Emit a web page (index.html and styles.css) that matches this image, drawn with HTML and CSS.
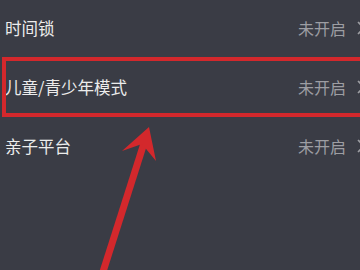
FILE: index.html
```html
<!DOCTYPE html>
<html lang="zh">
<head>
<meta charset="utf-8">
<link rel="stylesheet" href="styles.css">
</head>
<body>
<div class="screen">
  <ul class="list">
    <li class="row"><span class="label">时间锁</span><span class="value">未开启<svg class="chev" width="8" height="14" viewBox="0 0 8 14"><polyline points="1,1 7,7 1,13" fill="none" stroke="#9d9ea3" stroke-width="1.6"/></svg></span></li>
    <li class="row"><span class="label">儿童/青少年模式</span><span class="value">未开启<svg class="chev" width="8" height="14" viewBox="0 0 8 14"><polyline points="1,1 7,7 1,13" fill="none" stroke="#9d9ea3" stroke-width="1.6"/></svg></span></li>
    <li class="row"><span class="label">亲子平台</span><span class="value">未开启<svg class="chev" width="8" height="14" viewBox="0 0 8 14"><polyline points="1,1 7,7 1,13" fill="none" stroke="#9d9ea3" stroke-width="1.6"/></svg></span></li>
  </ul>
  <div class="highlight"></div>
  <svg class="arrow" width="360" height="270" viewBox="0 0 360 270">
    <line x1="101" y1="278" x2="145" y2="140" stroke="#d3282c" stroke-width="7" />
    <polygon points="149,127 122,151 142,144 156,161" fill="#d3282c" />
  </svg>
</div>
</body>
</html>
```
FILE: styles.css
```css
html, body {
  margin: 0;
  padding: 0;
  background: #3a3c45;
  overflow: hidden;
}
.screen {
  position: relative;
  width: 360px;
  height: 270px;
  overflow: hidden;
  background: #3a3c45;
  font-family: "Noto Sans CJK SC", "Noto Sans", sans-serif;
}
.list {
  list-style: none;
  margin: -2px 0 0 0;
  padding: 0;
}
.row {
  height: 59px;
  display: flex;
  align-items: center;
  justify-content: space-between;
  padding-left: 5px;
  margin-right: -5px;
}
.label {
  color: #ececec;
  font-size: 16.5px;
}
.value {
  color: #9d9ea3;
  font-size: 16px;
  display: flex;
  align-items: center;
}
.chev {
  margin-left: 11px;
  display: block;
}
.highlight {
  position: absolute;
  left: 2px;
  right: 0;
  top: 57px;
  height: 52px;
  border: 4px solid #d3282c;
  border-right: none;
}
.arrow {
  position: absolute;
  left: 0;
  top: 0;
  pointer-events: none;
}
```
